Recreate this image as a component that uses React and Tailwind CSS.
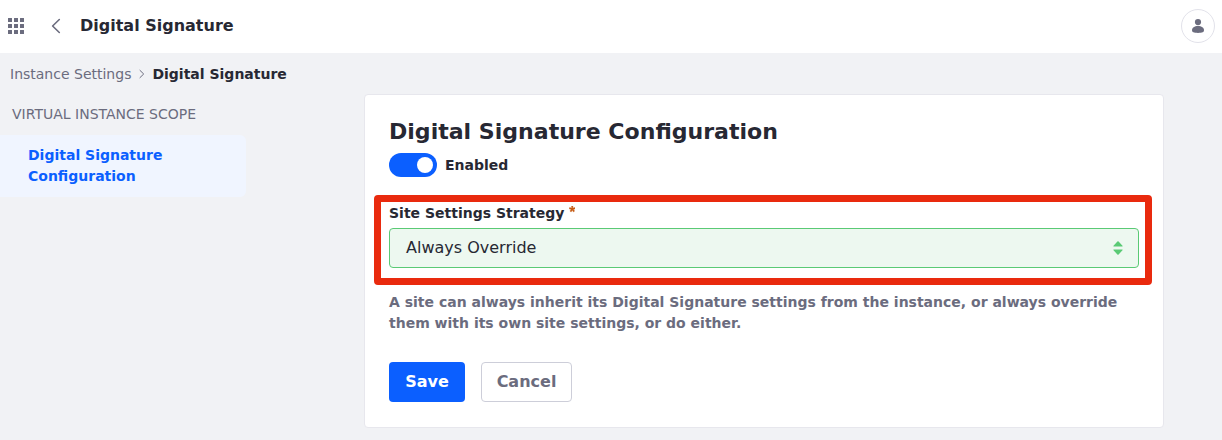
import React from "react";

function AppsGrid() {
  return (
    <svg className="size-4" viewBox="0 0 16 16" fill="currentColor">
      {[0, 6, 12].map((y) =>
        [0, 6, 12].map((x) => <rect key={`${x}-${y}`} x={x} y={y} width="4" height="4" rx="0.3" />)
      )}
    </svg>
  );
}

function Header() {
  return (
    <header className="flex h-[53px] shrink-0 items-center bg-white pr-[7px] pl-2 text-[#6b6c7e]">
      <button type="button" aria-label="Applications" className="mb-px">
        <AppsGrid />
      </button>
      <button type="button" aria-label="Back" className="mb-px ml-6">
        <svg className="size-4" viewBox="0 0 16 16" fill="none" stroke="currentColor" strokeWidth="1.6" strokeLinecap="round" strokeLinejoin="round">
          <path d="M11.3 1.500 4.600 8l6.700 6.500" />
        </svg>
      </button>
      <h1 className="mb-0.5 ml-4 text-base leading-6 font-bold text-[#272833]">Digital Signature</h1>
      <button
        type="button"
        aria-label="User"
        className="mb-px ml-auto flex size-[34px] items-center justify-center rounded-full border border-[#e2e2ea]"
      >
        <svg className="size-4" viewBox="0 0 16 16" fill="currentColor">
          <circle cx="8" cy="4.1" r="3.1" />
          <path d="M8 8c3.6 0 6 1.8 6 4.1S12.3 15 8 15s-6-.6-6-2.9S4.400 8 8 8z" />
        </svg>
      </button>
    </header>
  );
}

function Breadcrumb() {
  return (
    <nav className="flex h-[41px] items-center pt-0.5 pl-2.5 text-sm leading-[21px]">
      <span className="text-[#6b6c7e]">Instance Settings</span>
      <svg className="mr-[6px] mb-px ml-[6px] h-2.5 w-[9px]" viewBox="0 0 9 10" fill="none" stroke="#6b6c7e" strokeWidth="1">
        <path d="M2.700 1.100 6.700 5 2.700 8.900" />
      </svg>
      <span className="font-bold text-[#272833]">Digital Signature</span>
    </nav>
  );
}

export default function App() {
  return (
    <div className="flex h-[440px] w-[1222px] flex-col overflow-hidden bg-[#f1f2f5] font-['DejaVu_Sans',sans-serif] text-[#272833]">
      <Header />
      <Breadcrumb />
      <div className="flex items-start">
        <aside className="w-[364px] pt-[10px]">
          <div className="pl-3 text-sm leading-[21px] text-[#6b6c7e] uppercase">Virtual Instance Scope</div>
          <a className="mt-[10px] block h-[62px] w-[246px] rounded-r-md bg-[#f0f5ff] px-7 pt-[10px] text-sm leading-[21px] font-bold text-[#0b5fff]">
            Digital Signature Configuration
          </a>
        </aside>
        <main className="h-[334px] w-[800px] rounded border border-[#e7e7ed] bg-white px-6 pt-[23px]">
          <h2 className="text-[22.05px] leading-[28px] font-bold">Digital Signature Configuration</h2>
          <div className="mt-[7px] flex h-6 items-center gap-2">
            <span role="switch" aria-checked="true" className="flex h-6 w-12 items-center justify-end rounded-full bg-[#0b5fff] pr-1">
              <span className="size-4 rounded-full bg-white" />
            </span>
            <span className="text-sm leading-[21px] font-bold">Enabled</span>
          </div>
          <div className="relative mt-[25px]">
            <div className="pointer-events-none absolute -top-[7px] -left-[15px] h-[90px] w-[778px] rounded-[4px] border-[7px] border-[#e92a0e]" />
            <div className="flex h-[26px] items-start gap-[4.5px] pt-px text-sm leading-[21px] font-bold">
              Site Settings Strategy
              <svg className="mt-[3px] h-[6.5px] w-[6.5px]" viewBox="0 0 8 8" fill="#c65c16" stroke="#c65c16" strokeWidth="0.4">
                <path d="M3.100 0h1.800l-.2 2.400 2.600-.6.600 1.700-2.500.8 1.600 2-1.500 1.100L4 5.300 2.600 7.400 1.100 6.300l1.600-2L.1 3.500l.6-1.700 2.600.6z" />
              </svg>
            </div>
            <div className="flex h-10 w-[750px] items-center justify-between rounded border border-[#5aca75] bg-[#edf8f0] pr-3 pl-4">
              <span className="text-base leading-6">Always Override</span>
              <svg className="size-4" viewBox="0 0 16 16" fill="#5aca75">
                <path d="M3.900 6.600h8.200c.5 0 .7-.5.4-.8L8.600 1.500a.8.8 0 0 0-1.200 0L3.500 5.800c-.3.3-.1.800.4.800zM3.900 9.400h8.200c.5 0 .7.500.4.800l-3.900 4.300a.8.8 0 0 1-1.200 0l-3.900-4.300c-.3-.3-.1-.8.4-.8z" />
              </svg>
            </div>
          </div>
          <p className="mt-6 w-[750px] text-sm leading-[21px] font-bold text-[#6b6c7e]">
            A site can always inherit its Digital Signature settings from the instance, or always override them with its own site settings, or do either.
          </p>
          <div className="mt-7 flex gap-4 text-base leading-6 font-bold">
            <button type="button" className="h-10 w-[76px] rounded bg-[#0b5fff] pb-px text-white">Save</button>
            <button type="button" className="h-10 w-[91px] rounded border border-[#cdced9] bg-white pb-px text-[#6b6c7e]">Cancel</button>
          </div>
        </main>
      </div>
    </div>
  );
}
